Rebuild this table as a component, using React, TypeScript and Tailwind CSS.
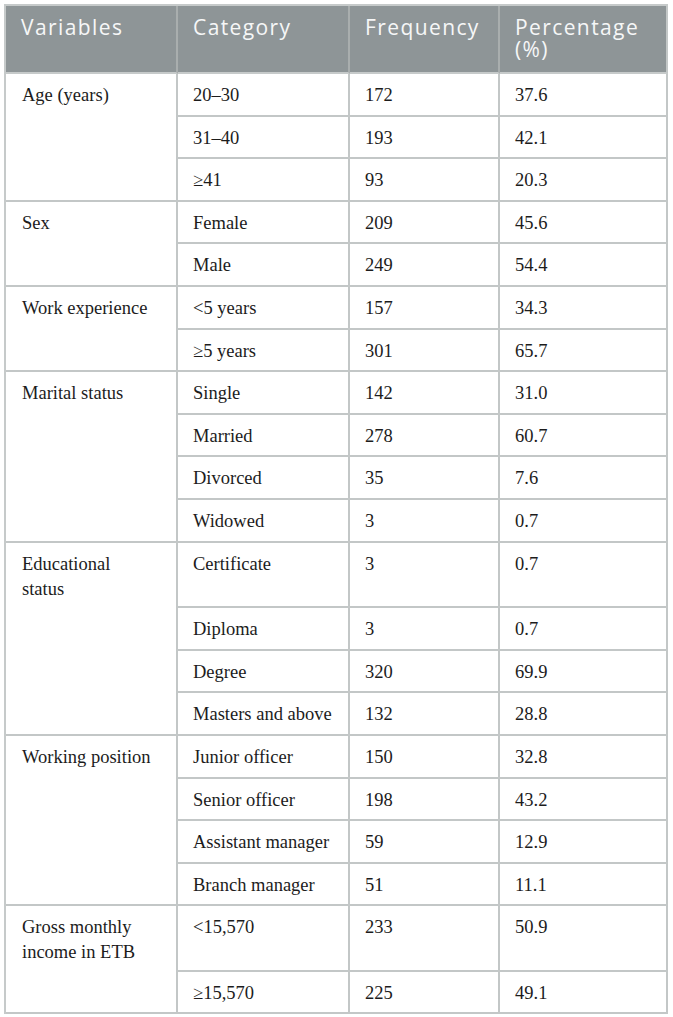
import React from "react";

type Group = { label: string[]; rows: [string, string, string][] };

const groups: Group[] = [
  {
    label: ["Age (years)"],
    rows: [
      ["20–30", "172", "37.6"],
      ["31–40", "193", "42.1"],
      ["≥41", "93", "20.3"],
    ],
  },
  {
    label: ["Sex"],
    rows: [
      ["Female", "209", "45.6"],
      ["Male", "249", "54.4"],
    ],
  },
  {
    label: ["Work experience"],
    rows: [
      ["<5 years", "157", "34.3"],
      ["≥5 years", "301", "65.7"],
    ],
  },
  {
    label: ["Marital status"],
    rows: [
      ["Single", "142", "31.0"],
      ["Married", "278", "60.7"],
      ["Divorced", "35", "7.6"],
      ["Widowed", "3", "0.7"],
    ],
  },
  {
    label: ["Educational", "status"],
    rows: [
      ["Certificate", "3", "0.7"],
      ["Diploma", "3", "0.7"],
      ["Degree", "320", "69.9"],
      ["Masters and above", "132", "28.8"],
    ],
  },
  {
    label: ["Working position"],
    rows: [
      ["Junior officer", "150", "32.8"],
      ["Senior officer", "198", "43.2"],
      ["Assistant manager", "59", "12.9"],
      ["Branch manager", "51", "11.1"],
    ],
  },
  {
    label: ["Gross monthly", "income in ETB"],
    rows: [
      ["<15,570", "233", "50.9"],
      ["≥15,570", "225", "49.1"],
    ],
  },
];

const cell =
  "align-top pl-[15px] pr-[10px] pt-[9px] pb-[6.6px] leading-[25px] border-r-2 border-[#c3c7c7]";

const HeadCell = ({ children, w }: { children: React.ReactNode; w: string }) => (
  <th
    className={`${w} h-[68px] align-top text-left font-normal pl-[15px] pr-[10px] pt-[10px] leading-[22px] text-[21px] tracking-[1.4px] text-[#f6f7f7] bg-[#8e9597] border-r-2 border-r-[#a9aeae] border-b-2 border-b-[#c6caca] last:border-r-[#c3c7c7]`}
  >
    {children}
  </th>
);

export default function App() {
  return (
    <div className="bg-white p-[4px] w-[673px] min-h-[1017px]">
      <table className="w-[664px] table-fixed border-separate border-spacing-0 border-l-2 border-t-2 border-[#c6caca] font-['Liberation_Serif',serif] text-[18.5px] text-[#1c1c1c]">
        <thead className="font-['Open_Sans',sans-serif]">
          <tr>
            <HeadCell w="w-[172px]">Variables</HeadCell>
            <HeadCell w="w-[172px]">Category</HeadCell>
            <HeadCell w="w-[150px]">Frequency</HeadCell>
            <HeadCell w="w-[168px]">Percentage (%)</HeadCell>
          </tr>
        </thead>
        <tbody>
          {groups.map((g) =>
            g.rows.map((r, i) => {
              const last = i === g.rows.length - 1;
              return (
                <tr key={g.label.join(" ") + r[0]}>
                  <td className={`${cell} pl-[16px] ${last ? "border-b-2" : ""}`}>
                    {i === 0 &&
                      g.label.map((l, k) => (
                        <React.Fragment key={l}>
                          {k > 0 && <br />}
                          {l}
                        </React.Fragment>
                      ))}
                  </td>
                  <td className={`${cell} border-b-2`}>{r[0]}</td>
                  <td className={`${cell} border-b-2`}>{r[1]}</td>
                  <td className={`${cell} border-b-2`}>{r[2]}</td>
                </tr>
              );
            })
          )}
        </tbody>
      </table>
    </div>
  );
}
